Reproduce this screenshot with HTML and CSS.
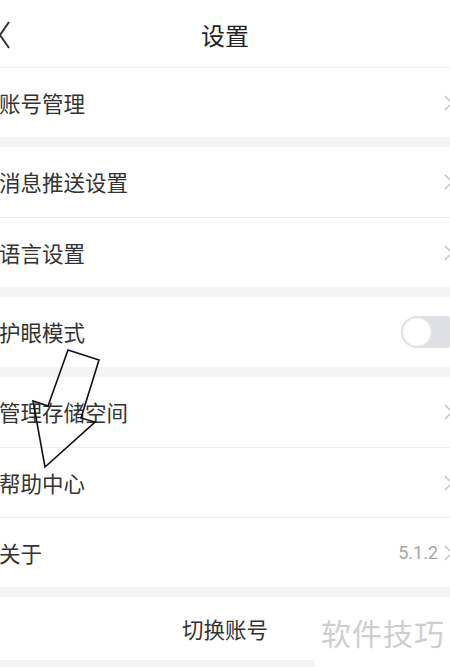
FILE: index.html
```html
<!DOCTYPE html>
<html lang="zh-CN">
<head>
<meta charset="utf-8">
<title>设置</title>
<link rel="stylesheet" href="styles.css">
</head>
<body>
<div class="page">
  <header class="topbar">
    <svg class="back" width="12" height="28" viewBox="0 0 12 28"><polyline points="10,1 1,14 10,27" fill="none" stroke="#333" stroke-width="2"/></svg>
    <h1 class="title">设置</h1>
  </header>

  <section class="group first">
    <div class="row"><span class="label">账号管理</span><svg class="chev" width="9" height="16" viewBox="0 0 9 16"><polyline points="1,1 8,8 1,15" fill="none" stroke="#c4c4c4" stroke-width="1.5"/></svg></div>
  </section>

  <section class="group">
    <div class="row"><span class="label">消息推送设置</span><svg class="chev" width="9" height="16" viewBox="0 0 9 16"><polyline points="1,1 8,8 1,15" fill="none" stroke="#c4c4c4" stroke-width="1.5"/></svg></div>
    <div class="row"><span class="label">语言设置</span><svg class="chev" width="9" height="16" viewBox="0 0 9 16"><polyline points="1,1 8,8 1,15" fill="none" stroke="#c4c4c4" stroke-width="1.5"/></svg></div>
  </section>

  <section class="group">
    <div class="row"><span class="label">护眼模式</span><span class="toggle"><span class="knob"></span></span></div>
  </section>

  <section class="group">
    <div class="row"><span class="label">管理存储空间</span><svg class="chev" width="9" height="16" viewBox="0 0 9 16"><polyline points="1,1 8,8 1,15" fill="none" stroke="#c4c4c4" stroke-width="1.5"/></svg></div>
    <div class="row"><span class="label">帮助中心</span><svg class="chev" width="9" height="16" viewBox="0 0 9 16"><polyline points="1,1 8,8 1,15" fill="none" stroke="#c4c4c4" stroke-width="1.5"/></svg></div>
    <div class="row"><span class="label">关于</span><span class="meta"><span class="version">5.1.2</span><svg class="chev" width="9" height="16" viewBox="0 0 9 16"><polyline points="1,1 8,8 1,15" fill="none" stroke="#c4c4c4" stroke-width="1.5"/></svg></span></div>
  </section>

  <section class="group">
    <div class="row switch"><span class="switch-label">切换账号</span></div>
  </section>

  <svg class="annot" width="450" height="667" viewBox="0 0 450 667"><polygon points="68,350 99,360 81,418 95,422 45,467 33,401 48,406" fill="none" stroke="#111" stroke-width="1.6" stroke-linejoin="miter"/></svg>
  <div class="watermark">软件技巧</div>
</div>
</body>
</html>
```

FILE: styles.css
```css
html, body {
  margin: 0;
  padding: 0;
}
body {
  width: 450px;
  height: 667px;
  overflow: hidden;
  background: #f4f4f5;
  font-family: "Noto Sans CJK SC", "Noto Sans", sans-serif;
  color: #333;
}
.page {
  position: relative;
  width: 450px;
  height: 667px;
  overflow: hidden;
  display: flex;
  flex-direction: column;
}
.topbar {
  height: 67px;
  background: #fff;
  border-bottom: 1px solid #f0f0f0;
  display: flex;
  align-items: center;
  justify-content: center;
  position: relative;
  flex-shrink: 0;
}
.back {
  position: absolute;
  left: -1px;
  top: 21px;
}
.title {
  margin: 0;
  font-size: 24px;
  font-weight: 400;
  color: #222;
  line-height: 1;
  padding-top: 3px;
}
.group {
  background: #fff;
  margin-top: 10px;
  display: flex;
  flex-direction: column;
  flex-shrink: 0;
}
.group.first {
  margin-top: 0;
}
.row {
  height: 70px;
  box-sizing: border-box;
  display: flex;
  align-items: center;
  justify-content: space-between;
}
.group.first .row {
  height: 69px;
}
.row + .row {
  border-top: 1px solid #ededed;
}
.label {
  font-size: 21.5px;
  color: #333;
  line-height: 1;
  margin-left: -1px;
}
.chev {
  margin-right: -3px;
  flex-shrink: 0;
}
.meta {
  display: flex;
  align-items: center;
  gap: 6px;
}
.version {
  font-family: "Roboto", "Liberation Sans", sans-serif;
  font-size: 18px;
  color: #a6a6a6;
}
.toggle {
  width: 60px;
  height: 32px;
  border-radius: 16px;
  background: #dfe0e6;
  margin-right: -11px;
  display: flex;
  align-items: center;
  padding-left: 1px;
  box-sizing: border-box;
}
.knob {
  width: 30px;
  height: 30px;
  border-radius: 50%;
  background: #fff;
  box-sizing: border-box;
  border: 1px solid #e4e4e8;
}
.row.switch {
  height: 63px;
  justify-content: center;
}
.switch-label {
  font-size: 21.5px;
  color: #333;
  line-height: 1;
}
.annot {
  position: absolute;
  left: 0;
  top: 0;
  pointer-events: none;
}
.watermark {
  position: absolute;
  left: 315px;
  top: 603px;
  width: 135px;
  height: 64px;
  background: #fff;
  color: #cfcfcf;
  font-size: 30px;
  line-height: 1;
  padding-left: 6px;
  padding-top: 14px;
  box-sizing: border-box;
  letter-spacing: 1px;
  white-space: nowrap;
}
```
